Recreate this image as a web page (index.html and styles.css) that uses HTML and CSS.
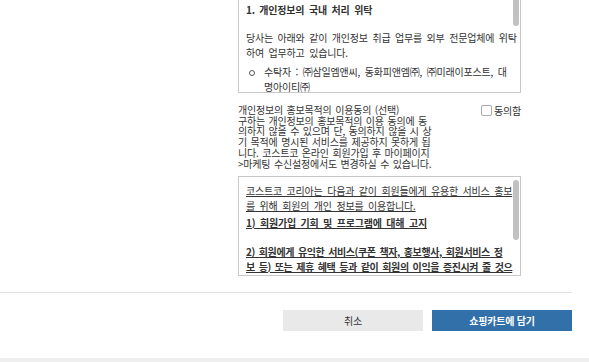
FILE: index.html
```html
<!DOCTYPE html>
<html lang="ko">
<head>
<meta charset="utf-8">
<title>개인정보 동의</title>
<link rel="stylesheet" href="styles.css">
</head>
<body>
<div class="modal">
  <div class="body">
    <div class="col">
      <div class="box box-top">
        <div class="h">1. 개인정보의 국내 처리 위탁</div>
        <div class="p"><span class="ln">당사는 아래와 같이 개인정보 취급 업무를 외부 전문업체에 위탁</span><span class="ln">하여 업무하고 있습니다.</span></div>
        <ul class="list">
          <li><span class="ln">수탁자 : ㈜삼일엠앤씨, 동화피앤엠㈜, ㈜미래이포스트, 대</span><span class="ln">명아이티㈜</span></li>
        </ul>
        <div class="thumb thumb-top"></div>
      </div>

      <div class="consent">
        <div class="consent-text">
          <span class="ln">개인정보의 홍보목적의 이용동의 (선택)</span>
          <span class="ln">구하는 개인정보의 홍보목적의 이용 동의에 동</span>
          <span class="ln">의하지 않을 수 있으며 단, 동의하지 않을 시 상</span>
          <span class="ln">기 목적에 명시된 서비스를 제공하지 못하게 됩</span>
          <span class="ln">니다. 코스트코 온라인 회원가입 후 마이페이지</span>
          <span class="ln">&gt;마케팅 수신설정에서도 변경하실 수 있습니다.</span>
        </div>
        <label class="agree"><span class="chk"></span>동의함</label>
      </div>

      <div class="box box-bottom">
        <div class="bp"><span class="ln"><u>코스트코 코리아는 다음과 같이 회원들에게 유용한 서비스 홍보</u></span><span class="ln"><u>를 위해 회원의 개인 정보를 이용합니다.</u></span></div>
        <div class="bp b1"><span class="ln"><u>1) 회원가입 기회 및 프로그램에 대해 고지</u></span></div>
        <div class="bp b2"><span class="ln"><u>2) 회원에게 유익한 서비스(쿠폰 책자, 홍보행사, 회원서비스 정</u></span><span class="ln"><u>보 등) 또는 제휴 혜택 등과 같이 회원의 이익을 증진시켜 줄 것으</u></span><span class="ln"><u>로 판단되는 정보의 제공</u></span></div>
        <div class="thumb thumb-bottom"></div>
      </div>
    </div>
  </div>

  <div class="footer">
    <button class="btn cancel" type="button">취소</button>
    <button class="btn cart" type="button">쇼핑카트에 담기</button>
  </div>
</div>
<div class="band"></div>
</body>
</html>
```

FILE: styles.css
```css
* {
  box-sizing: border-box;
  margin: 0;
  padding: 0;
}

body {
  font-family: "Noto Sans CJK KR", "Noto Sans", sans-serif;
  font-size: 10px;
  letter-spacing: -0.2px;
  word-spacing: 1px;
  color: #333;
  background: #fff;
  width: 589px;
  height: 362px;
  overflow: hidden;
}

.modal {
  width: 572px;
}

.body {
  padding-left: 238px;
}

.col {
  width: 283px;
}

.ln {
  display: block;
  white-space: nowrap;
}

.box {
  border: 1px solid #c9c9c9;
  position: relative;
  overflow: hidden;
  word-spacing: 2px;
}

.box-top {
  margin-top: -1px;
  height: 94px;
  padding: 2px 0 0 7px;
}

.h {
  font-weight: 700;
  line-height: 15px;
}

.p {
  margin-top: 13px;
  line-height: 15px;
}

.list {
  list-style: none;
  margin-top: 4px;
  line-height: 15px;
}

.list li {
  position: relative;
  padding-left: 18px;
}

.list li::before {
  content: "";
  position: absolute;
  left: 3px;
  top: 6px;
  width: 4px;
  height: 4px;
  border: 1px solid #555;
  border-radius: 50%;
}

.thumb {
  position: absolute;
  right: 1px;
  width: 6px;
  background: #c1c1c1;
}

.thumb-top {
  top: 0;
  height: 26px;
  border-radius: 0 0 3px 3px;
}

.thumb-bottom {
  top: 3px;
  height: 60px;
  border-radius: 3px;
}

.consent {
  display: flex;
  margin-top: 12px;
}

.consent-text {
  width: 245px;
  line-height: 10.7px;
  color: #333;
}

.agree {
  display: flex;
  align-items: center;
  height: 11px;
  gap: 2px;
  white-space: nowrap;
  color: #333;
}

.chk {
  width: 11px;
  height: 11px;
  border: 1px solid #a9a9a9;
  border-radius: 2px;
  background: #fff;
}

.box-bottom {
  margin-top: 7px;
  height: 100px;
  padding: 7px 0 0 7px;
  line-height: 14.5px;
}

.bp u {
  text-decoration: underline;
}

.b1 {
  margin-top: 2.5px;
  font-weight: 700;
}

.b2 {
  margin-top: 15px;
  font-weight: 700;
  letter-spacing: -0.4px;
  word-spacing: 1.5px;
}

.footer {
  margin-top: 16px;
  border-top: 1px solid #e3e3e3;
  padding-top: 17px;
  display: flex;
  justify-content: flex-end;
  gap: 9px;
}

.btn {
  width: 140px;
  height: 21px;
  border: none;
  display: flex;
  align-items: center;
  justify-content: center;
  font-family: inherit;
  font-size: 10px;
  letter-spacing: -0.2px;
}

.cancel {
  background: #e9e9e9;
  color: #333;
}

.cart {
  background: #3170a8;
  color: #fff;
  font-weight: 700;
}

.band {
  margin-top: 27px;
  height: 4px;
  background: #efefef;
  width: 589px;
}
```
